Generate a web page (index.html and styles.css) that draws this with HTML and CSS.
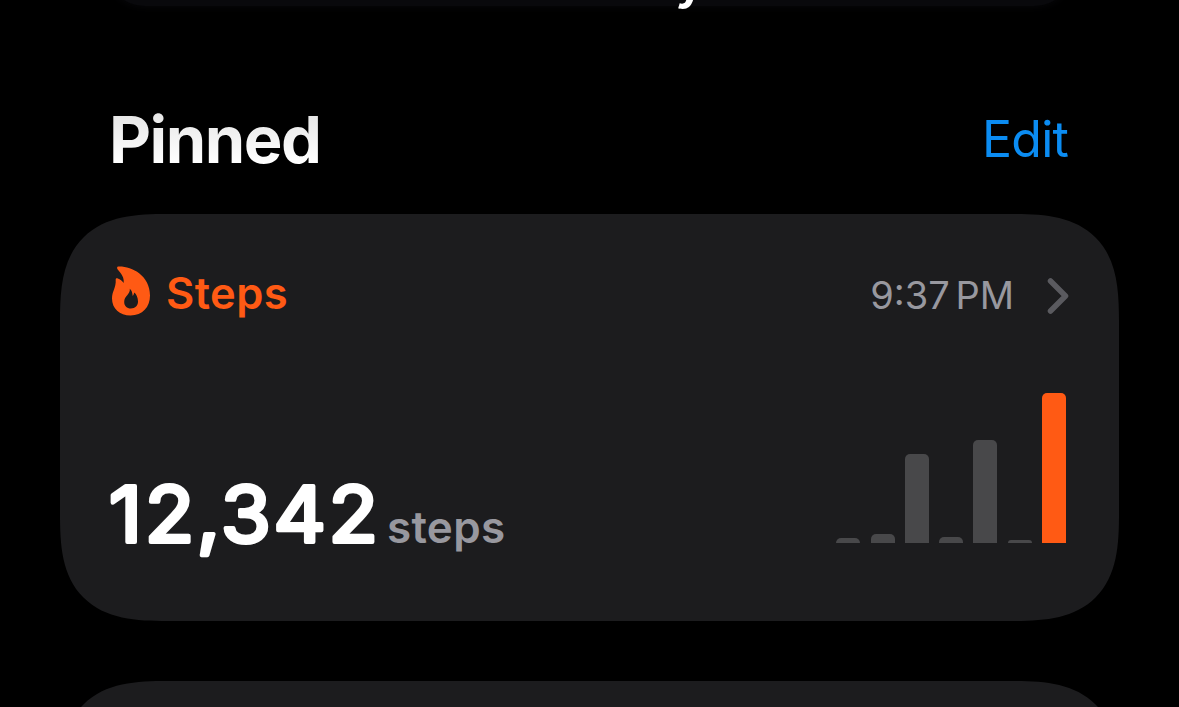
FILE: index.html
```html
<!DOCTYPE html>
<html lang="en">
<head>
  <meta charset="UTF-8">
  <meta name="viewport" content="width=device-width, initial-scale=1.0">
  <title>Summary</title>
  <link rel="stylesheet" href="styles.css">
</head>
<body>
  <!-- Title bar, scrolled mostly out of view -->
  <header class="top-bar"><span class="top-title">y</span></header>

  <main class="container">
    <div class="section-header">
      <h1>Pinned</h1>
      <a class="edit" href="#">Edit</a>
    </div>

    <section class="card">
      <div class="card-header">
        <svg class="flame" viewBox="0 0 38 50">
          <path fill="#ff5a14" fill-rule="evenodd" d="M6.3 0.6C19 0 38 9 38 29.5C38 41 30.5 49.5 18.5 49.5C7.5 49.5 0 42.5 0 32.5C0 25 4.2 22 3.7 13.5C3.7 12.4 4.8 12 5.8 12.6C8.2 13.6 10.2 14.8 11.6 17C12.6 11.5 9 7.5 5.7 3.5C4.7 2.3 4.9 0.8 6.3 0.6ZM17.8 22.8C18.5 28.5 12.2 29.8 12.2 36C12.2 40 15 42.5 18.8 42.5C23.3 42.5 26 39.5 26 35.5C26 31.5 24.4 28.2 22.3 26.5C21.9 28 21.5 29.2 20.7 30C20.2 27 20 24.5 17.8 22.8Z"/>
        </svg>
        <h2>Steps</h2>
        <span class="time">9:37 PM</span>
        <svg class="chevron" viewBox="0 0 22 36">
          <path d="M3.5 3L18.5 18L3.5 33" fill="none" stroke="#5a5a5f" stroke-width="5.5" stroke-linecap="round" stroke-linejoin="round"/>
        </svg>
      </div>

      <div class="card-body">
        <div class="total">
          <svg class="value" viewBox="0 0 277 90"><text x="-1" y="66.5" transform="scale(1.055 1)">12,342</text></svg>
          <span class="unit">steps</span>
        </div>
        <div class="chart">
          <div class="bar" style="height: 5px"></div>
          <div class="bar" style="height: 9px"></div>
          <div class="bar" style="height: 89px"></div>
          <div class="bar" style="height: 6px"></div>
          <div class="bar" style="height: 103px"></div>
          <div class="bar" style="height: 3px"></div>
          <div class="bar today" style="height: 150px"></div>
        </div>
      </div>
    </section>

    <section class="card"></section>
  </main>
</body>
</html>
```
FILE: styles.css
```css
* {
  box-sizing: border-box;
}

body {
  font-family: Inter, 'Liberation Sans', sans-serif;
  background: #000;
  color: #fff;
  margin: 0;
  height: 707px;
  overflow: hidden;
}

.top-bar {
  position: absolute;
  top: -90px;
  left: 105px;
  width: 969px;
  height: 96px;
  border-radius: 40px;
  background: #09090c;
  box-shadow: 0 0 10px #09090c;
}

.top-title {
  position: absolute;
  left: 570px;
  bottom: 1px;
  font-size: 52px;
  line-height: 50px;
  font-weight: 600;
}

.container {
  height: 707px;
  padding: 0 60px;
  overflow: hidden;
}

.section-header {
  display: flex;
  justify-content: space-between;
  align-items: flex-start;
  height: 214px;
  padding: 101px 51px 0 49px;
}

h1 {
  margin: 0;
  font-size: 65px;
  line-height: 78px;
  font-weight: 700;
  letter-spacing: -1.5px;
  background: linear-gradient(#e8e8e8 15px, #fff 62px);
  background-clip: text;
  color: transparent;
}

.edit {
  padding-top: 8px;
  color: #0b8cf2;
  font-size: 50px;
  line-height: 60px;
  letter-spacing: -0.8px;
  text-decoration: none;
}

.card {
  height: 407px;
  margin-bottom: 60px;
  padding: 52px 50px 0;
  border-radius: 108px;
  corner-shape: superellipse(1.5);
  background: #1c1c1e;
}

.card-header {
  display: flex;
  align-items: center;
  height: 56px;
}

.flame {
  width: 38px;
  height: 50px;
  margin: -6px 16px 0 2px;
}

h2 {
  margin: -3px 0 0;
  color: #ff5a14;
  font-size: 43.5px;
  font-weight: 600;
  letter-spacing: 0.4px;
}

.time {
  margin: 2px 0 0 auto;
  color: #98989f;
  font-size: 38px;
  word-spacing: -5px;
}

.chevron {
  width: 22px;
  height: 36px;
  margin: 4px 0 0 33px;
}

.card-body {
  display: flex;
  justify-content: space-between;
  align-items: flex-end;
  height: 221px;
  padding-right: 3px;
}

.total {
  display: flex;
  align-items: flex-end;
  margin-bottom: -22px;
}

.value {
  width: 277px;
  height: 90px;
  overflow: visible;
  font-size: 77px;
  font-weight: 400;
  letter-spacing: 2.5px;
}

/* the round stroke softens the ends of the digits */
.value text {
  fill: #fff;
  stroke: #fff;
  stroke-width: 4px;
  stroke-linejoin: round;
}

.unit {
  margin-bottom: 11px;
  color: #98989f;
  font-size: 44px;
  line-height: 54px;
  font-weight: 600;
  letter-spacing: 0.3px;
}

.chart {
  display: flex;
  align-items: flex-end;
  gap: 10.3px;
  height: 150px;
}

.bar {
  width: 24px;
  border-radius: 5px 5px 0 0;
  background: #48484a;
}

.today {
  background: #ff5a14;
}
```
